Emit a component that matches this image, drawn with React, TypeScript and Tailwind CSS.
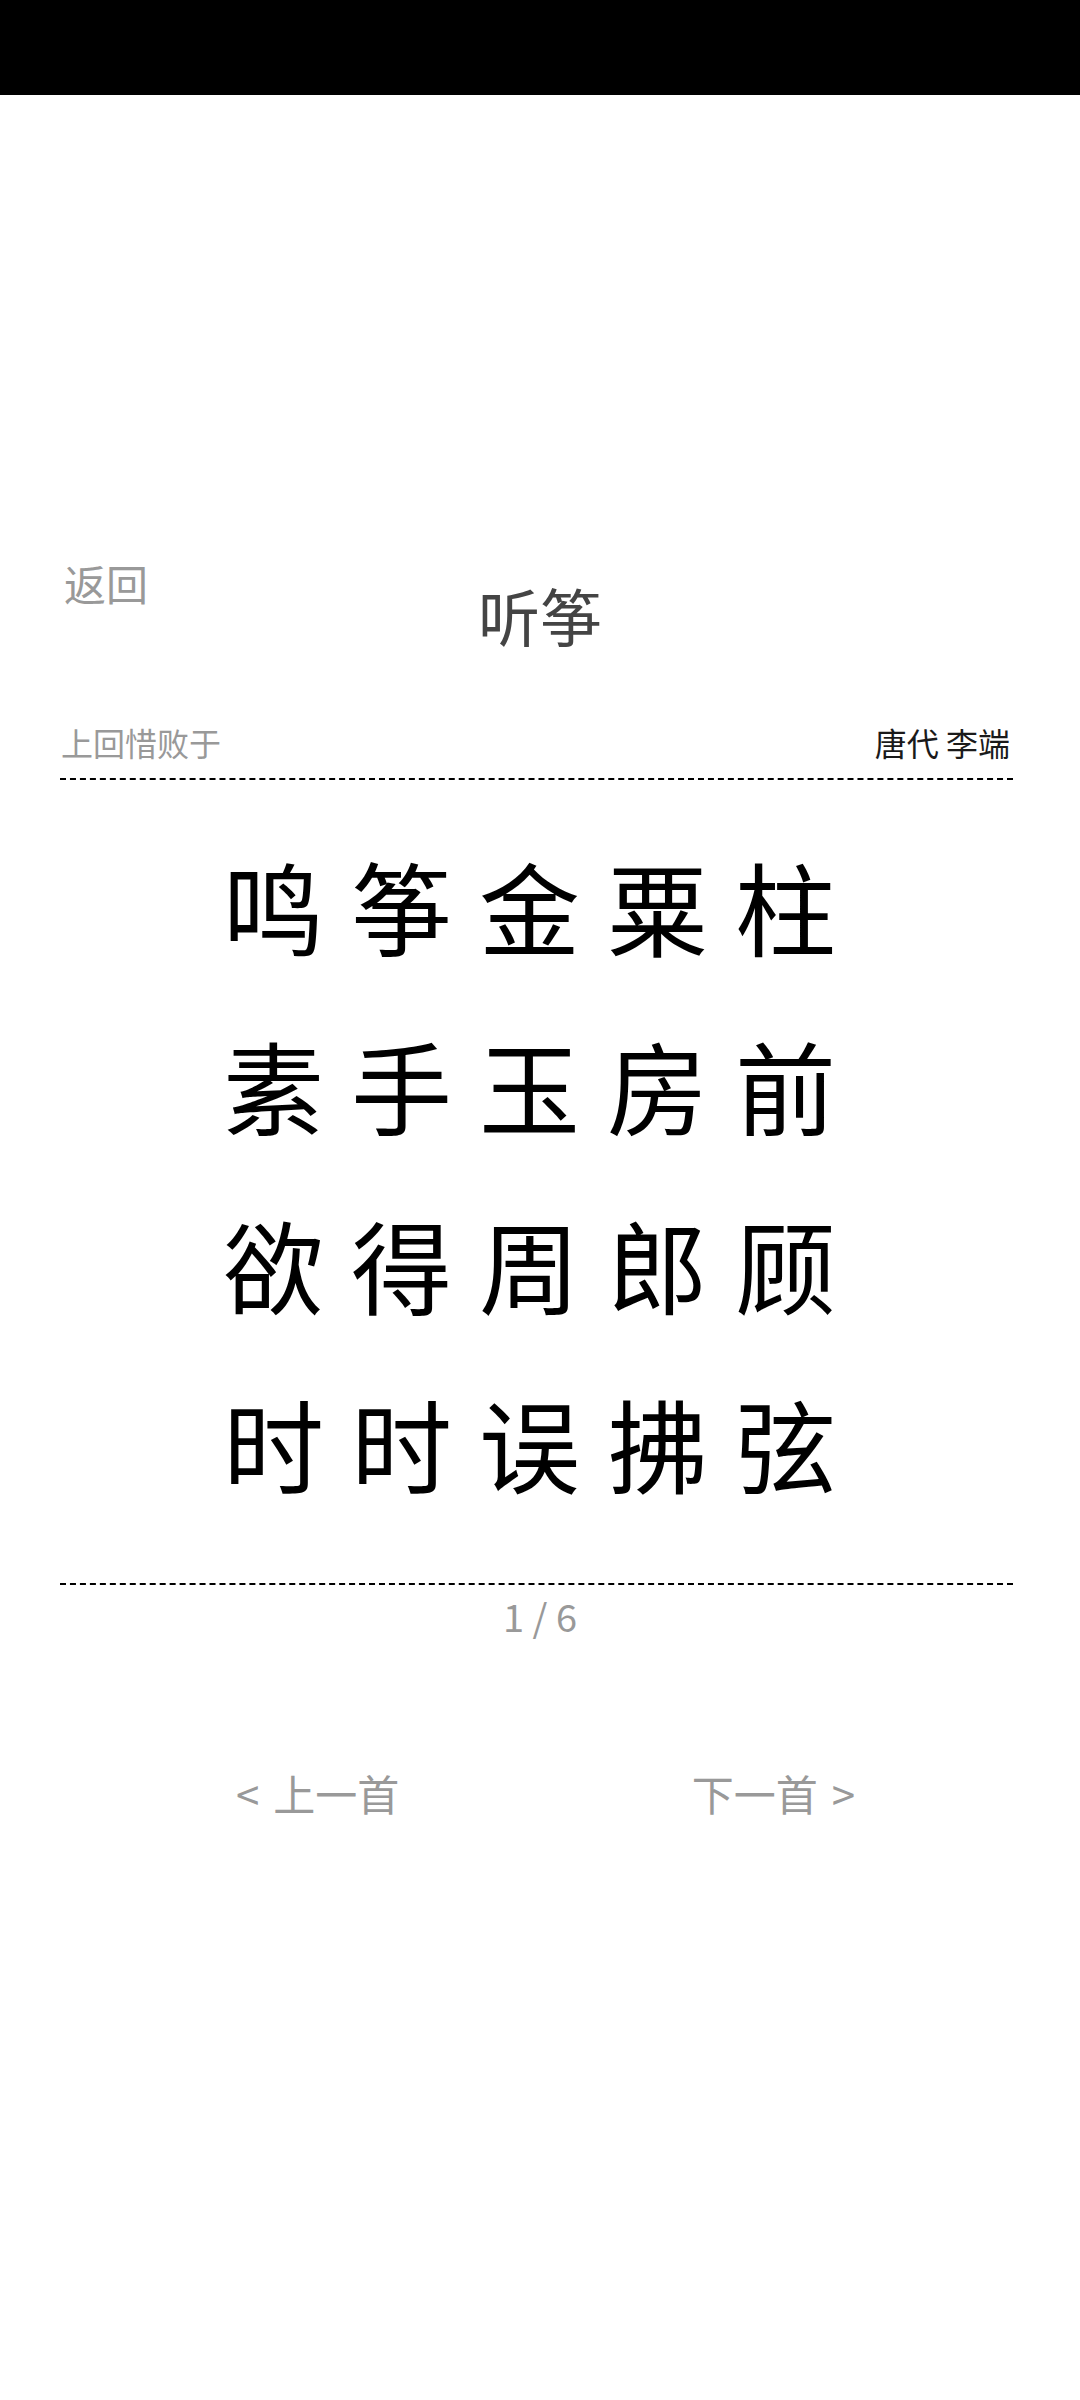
import React from "react";

const lines = ["鸣筝金粟柱", "素手玉房前", "欲得周郎顾", "时时误拂弦"];

export default function App() {
  return (
    <div className="w-[1080px] min-h-[2400px] bg-white flex flex-col font-['Noto_Sans_CJK_SC','Noto_Sans',sans-serif]">
      <div className="h-[95px] bg-black shrink-0" />

      <div className="pt-[467px] pl-[64px] pr-[64px] grid grid-cols-[1fr_auto_1fr] items-start">
        <div className="text-[42px] leading-none text-[#999999]">返回</div>
        <div className="mt-[22px] text-[62px] leading-none text-[#444444]">听筝</div>
        <div />
      </div>

      <div className="mt-[80px] pl-[61px] pr-[70px] flex justify-between items-center text-[32px] leading-none">
        <span className="text-[#999999]">上回惜败于</span>
        <span className="text-[#1a1a1a]">唐代 李端</span>
      </div>

      <div className="mt-[20px] ml-[60px] mr-[67px] border-t-2 border-dashed border-black" />

      <div className="pt-[36px] pb-[51px] pl-[6px] flex flex-col items-center">
        {lines.map((l) => (
          <div key={l} className="text-[101px] leading-[179px] tracking-[27px] text-black">
            {l}
          </div>
        ))}
      </div>

      <div className="ml-[60px] mr-[67px] border-t-2 border-dashed border-black" />

      <div className="mt-[12px] text-center text-[38px] leading-none text-[#999999]">1 / 6</div>

      <div className="mt-[137px] pl-[236px] pr-[225px] flex justify-between text-[42px] leading-none text-[#999999]">
        <div className="flex items-center gap-[14px]">
          <span>&lt;</span>
          <span>上一首</span>
        </div>
        <div className="flex items-center gap-[14px]">
          <span>下一首</span>
          <span>&gt;</span>
        </div>
      </div>
    </div>
  );
}
